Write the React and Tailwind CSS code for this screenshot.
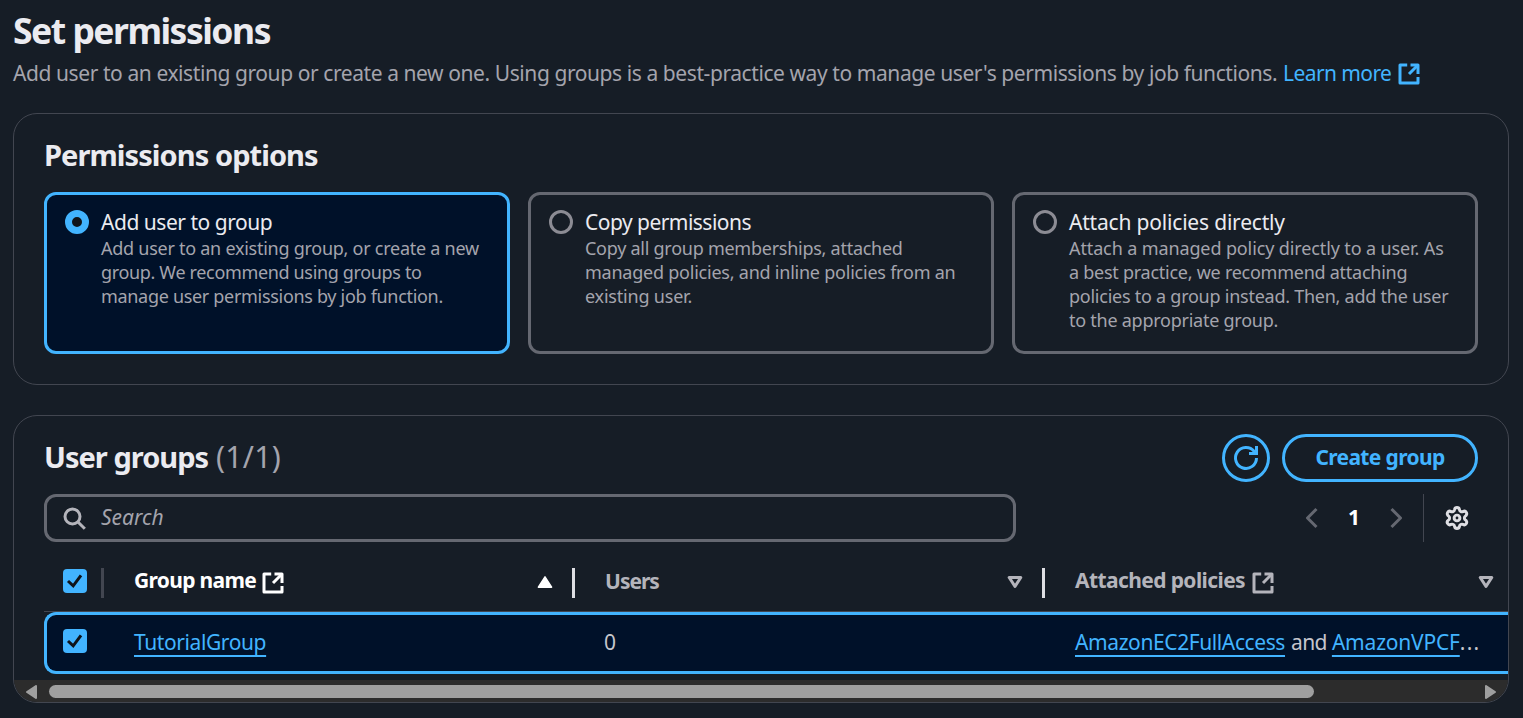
const ExternalIcon = ({ className = '' }) => (
  <svg className={`size-6 shrink-0 ${className}`} viewBox="0 0 16 16" fill="none" stroke="currentColor" strokeWidth="2" strokeLinejoin="round">
    <path d="M14 8V2H9" />
    <path d="m8 8 6-6" />
    <path d="M14 10v4H2V2h4.8" />
  </svg>
);

const RefreshIcon = () => (
  <svg className="size-6 overflow-visible" viewBox="0 0 16 16" fill="none" stroke="currentColor" strokeWidth="2" strokeLinejoin="miter">
    <path d="M15 8a7 7 0 1 1-1.6-4.5L15 5" />
    <path d="M10 5h5V0" />
  </svg>
);

const SearchIcon = () => (
  <svg className="size-6 shrink-0 overflow-visible text-[#b4b4bb]" viewBox="0 0 16 16" fill="none" stroke="currentColor" strokeWidth="2">
    <circle cx="7" cy="7" r="5" />
    <path d="m15.2 15.2-4.7-4.7" />
  </svg>
);

const Chevron = ({ right }) => (
  <svg className="size-6 text-[#656871]" viewBox="0 0 16 16" fill="none" stroke="currentColor" strokeWidth="2" strokeLinejoin="round">
    <path d={right ? 'm5 2 6 6-6 6' : 'm11 2-6 6 6 6'} />
  </svg>
);

const GearIcon = () => (
  <svg className="size-6 overflow-visible" viewBox="0.7 0.7 22.6 22.6" fill="none" stroke="currentColor" strokeWidth="2.8" strokeLinejoin="round">
    <path d="M9.7 4.1a2.34 2.34 0 0 1 4.6 0 2.34 2.34 0 0 0 3.3 1.9 2.34 2.34 0 0 1 2.4 4.05 2.34 2.34 0 0 0 0 3.9 2.34 2.34 0 0 1-2.4 4.05 2.34 2.34 0 0 0-3.3 1.9 2.34 2.34 0 0 1-4.6 0 2.34 2.34 0 0 0-3.3-1.9A2.34 2.34 0 0 1 4 13.95a2.34 2.34 0 0 0 0-3.9A2.34 2.34 0 0 1 6.4 6a2.34 2.34 0 0 0 3.3-1.9" />
    <circle cx="12" cy="12" r="2.7" />
  </svg>
);

const SortIcon = ({ active }) => (
  <svg className="size-6" viewBox="0 0 24 24" fill={active ? 'currentColor' : 'none'} stroke="currentColor" strokeWidth={active ? 1.5 : 3} strokeLinejoin="round">
    <path d={active ? 'M12 6.8 18.6 17.2H5.4Z' : 'M6.2 7.5h11.6L12 16.4Z'} />
  </svg>
);

const Checkbox = () => (
  <span className="block size-6 shrink-0 rounded-[4px] bg-[#42b4ff]">
    <svg className="size-6" viewBox="0 0 24 24" fill="none" stroke="#0f141a" strokeWidth="3">
      <path d="m5 12 5.2 4.8 7.8-10.4" />
    </svg>
  </span>
);

const options = [
  {
    title: 'Add user to group',
    spacing: 'tracking-[-0.47px]',
    lines: [
      ['Add user to an existing group, or create a new', 'tracking-[-0.26px]'],
      ['group. We recommend using groups to', 'tracking-[-0.34px]'],
      ['manage user permissions by job function.', 'tracking-[-0.31px]'],
    ],
    selected: true,
  },
  {
    title: 'Copy permissions',
    spacing: 'tracking-[-0.53px]',
    lines: [
      ['Copy all group memberships, attached', 'tracking-[-0.26px]'],
      ['managed policies, and inline policies from an', 'tracking-[-0.23px]'],
      ['existing user.', 'tracking-[-0.2px]'],
    ],
  },
  {
    title: 'Attach policies directly',
    spacing: 'tracking-[-0.19px]',
    lines: [
      ['Attach a managed policy directly to a user. As', 'tracking-[-0.12px]'],
      ['a best practice, we recommend attaching', 'tracking-[-0.26px]'],
      ['policies to a group instead. Then, add the user', 'tracking-[-0.25px]'],
      ['to the appropriate group.', 'tracking-[-0.25px]'],
    ],
  },
];

function OptionTile({ title, spacing, lines, selected }) {
  return (
    <div className={`flex h-[162px] gap-3 rounded-xl border-[3px] pl-[18px] pt-3 ${selected ? 'border-[#42b4ff] bg-[#001129]' : 'border-[#656871]'}`}>
      <span className={`mt-[3px] size-6 shrink-0 rounded-full ${selected ? 'border-[7px] border-[#42b4ff] bg-[#0f141a]' : 'border-[3px] border-[#8c8c94]'}`} />
      <div className="whitespace-nowrap">
        <div className={`h-[29px] text-[21px] leading-[30px] text-[#ebebf0] ${spacing}`}>{title}</div>
        {lines.map(([line, tracking]) => (
          <div key={line} className={`text-[18px] leading-6 text-[#a4a4ad] ${tracking}`}>{line}</div>
        ))}
      </div>
    </div>
  );
}

export default function App() {
  return (
    <main className="h-[718px] w-[1523px] overflow-hidden bg-[#161d26] px-[13px] pt-2 font-['Noto_Sans',sans-serif] text-[21px] text-[#c6c6cd]">
      <h1 className="h-[45px] whitespace-nowrap text-[35.5px] font-bold leading-[45px] tracking-[-1.5px] text-[#ebebf0]">Set permissions</h1>
      <p className="mt-[5px] flex h-[30px] items-center whitespace-nowrap leading-[30px] text-[#a4a4ad]">
        <span className="w-[1270px] tracking-[-0.42px]">
          Add user to an existing group or create a new one. Using groups is a best-practice way to manage user's permissions by job functions.
        </span>
        <a className="flex items-center text-[#42b4ff]">
          <span className="w-[114px] tracking-[-0.58px]">Learn more</span>
          <ExternalIcon className="mt-0.5" />
        </a>
      </p>

      <section className="mt-[25px] h-[272px] w-[1496px] rounded-3xl border border-[#424650] px-[30px] pt-[23px]">
        <h2 className="h-9 whitespace-nowrap text-[29px] font-bold leading-9 tracking-[-0.93px] text-[#ebebf0]">Permissions options</h2>
        <div className="mt-[19px] grid grid-cols-3 gap-[18px]">
          {options.map((option) => <OptionTile key={option.title} {...option} />)}
        </div>
      </section>

      <section className="mt-[30px] flex h-[288px] w-[1496px] flex-col overflow-hidden rounded-3xl border border-[#424650]">
        <header className="mt-[18px] flex h-12 items-center justify-between px-[30px]">
          <h2 className="flex whitespace-nowrap pb-[3px] text-[29px] font-bold leading-9 text-[#ebebf0]">
            <span className="w-[172px] tracking-[-0.98px]">User groups</span>
            <span className="text-[30px] font-normal tracking-[0.3px] text-[#a4a4ad]">(1/1)</span>
          </h2>
          <div className="flex gap-3 text-[#42b4ff]">
            <button className="flex size-12 items-center justify-center rounded-full border-[3px] border-[#42b4ff]"><RefreshIcon /></button>
            <button className="h-12 w-[196px] whitespace-nowrap rounded-full border-[3px] border-[#42b4ff] text-[21px] font-bold tracking-[-0.65px]">Create group</button>
          </div>
        </header>

        <div className="mt-3 flex h-12 shrink-0 justify-between pl-[30px] pr-[39px]">
          <label className="flex w-[972px] items-center rounded-xl border-[3px] border-[#656871] pl-[15px]">
            <SearchIcon />
            <span className="ml-[15px] italic text-[#a4a4ad]">Search</span>
          </label>
          <nav className="flex items-center">
            <Chevron />
            <span className="w-[60px] text-center font-bold text-white">1</span>
            <Chevron right />
            <span className="ml-[15px] mr-[21px] h-12 w-px bg-[#424650]" />
            <span className="text-[#dedee3]"><GearIcon /></span>
          </nav>
        </div>

        <div className="ml-[30px] mt-[18px] flex h-[52px] shrink-0 items-center whitespace-nowrap border-b border-[#424650] pb-2 pl-[19px] font-bold text-[#b4b4bb]">
          <div className="flex w-[71px] items-center gap-[14px] pb-px">
            <Checkbox />
            <span className="h-[30px] w-[3px] translate-y-[2px] bg-[#424650]" />
          </div>
          <div className="flex w-[470px] items-center text-white">
            <span className="w-[127px] pb-px tracking-[-0.68px]">Group name</span>
            <ExternalIcon className="mt-0.5" />
            <span className="ml-auto mr-[15px]"><SortIcon active /></span>
            <span className="mr-[29px] h-[30px] w-[3px] translate-y-px bg-[#dedee3]" />
          </div>
          <div className="flex w-[471px] items-center">
            <span className="pl-px tracking-[-1px]">Users</span>
            <span className="ml-auto mr-[15px]"><SortIcon /></span>
            <span className="mr-[30px] h-[30px] w-[3px] translate-y-px bg-[#dedee3]" />
          </div>
          <div className="flex flex-1 items-center">
            <span className="w-[176px] pb-px tracking-[-0.6px]">Attached policies</span>
            <ExternalIcon className="mt-0.5" />
            <span className="ml-auto mr-[10px]"><SortIcon /></span>
          </div>
        </div>

        <div className="ml-[30px] flex h-[62px] shrink-0 items-center whitespace-nowrap rounded-l-xl border-y-[3px] border-l-[3px] border-[#42b4ff] bg-[#001129] pb-px pl-4">
          <div className="w-[71px] pb-[3px]"><Checkbox /></div>
          <div className="w-[470px]">
            <a className="text-[#42b4ff] underline decoration-2 underline-offset-[5px] tracking-[-0.4px]">TutorialGroup</a>
          </div>
          <div className="w-[471px]">0</div>
          <div className="flex">
            <a className="mr-[6px] text-[#42b4ff] underline decoration-2 underline-offset-[5px] tracking-[-0.4px]">AmazonEC2FullAccess</a>
            <span className="mr-[5px] tracking-[-0.6px]">and</span>
            <a className="text-[#42b4ff] underline decoration-2 underline-offset-[5px] tracking-[-0.2px]">AmazonVPCF</a>
            <span className="tracking-[1.3px]">...</span>
          </div>
        </div>

        <div className="mt-[6px] flex flex-1 items-center bg-[#2c2c2c]">
          <svg className="ml-3 mt-px h-[14px] w-[11px] shrink-0" viewBox="0 0 11 14" fill="#9f9f9f" stroke="#9f9f9f" strokeWidth="2" strokeLinejoin="round"><path d="M10 1v12L1 7Z" /></svg>
          <span className="ml-3 h-[13px] w-[1265px] rounded-full bg-[#9f9f9f]" />
          <svg className="ml-auto mr-3 mt-px h-[14px] w-[11px] shrink-0" viewBox="0 0 11 14" fill="#9f9f9f" stroke="#9f9f9f" strokeWidth="2" strokeLinejoin="round"><path d="M1 1v12l9-6Z" /></svg>
        </div>
      </section>
    </main>
  );
}
